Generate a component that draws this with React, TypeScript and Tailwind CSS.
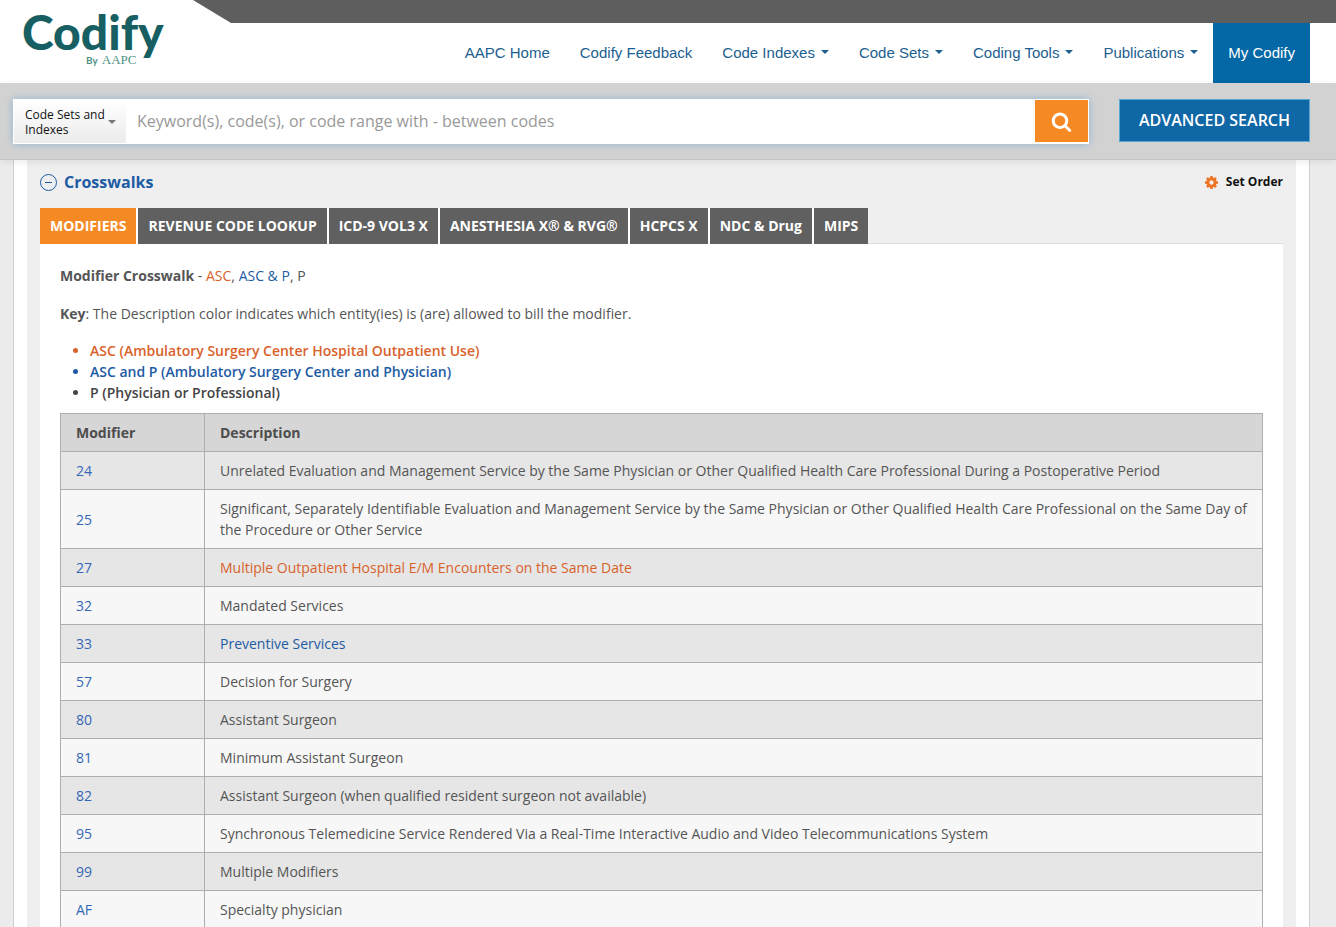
const navItems = [
  { label: 'AAPC Home', menu: false },
  { label: 'Codify Feedback', menu: false },
  { label: 'Code Indexes', menu: true },
  { label: 'Code Sets', menu: true },
  { label: 'Coding Tools', menu: true },
  { label: 'Publications', menu: true },
];

const tabs = [
  'MODIFIERS',
  'REVENUE CODE LOOKUP',
  'ICD-9 VOL3 X',
  'ANESTHESIA X® & RVG®',
  'HCPCS X',
  'NDC & Drug',
  'MIPS',
];

const modifiers = [
  { code: '24', text: 'Unrelated Evaluation and Management Service by the Same Physician or Other Qualified Health Care Professional During a Postoperative Period', color: '' },
  { code: '25', text: 'Significant, Separately Identifiable Evaluation and Management Service by the Same Physician or Other Qualified Health Care Professional on the Same Day of the Procedure or Other Service', color: '' },
  { code: '27', text: 'Multiple Outpatient Hospital E/M Encounters on the Same Date', color: 'text-[#d9622b]' },
  { code: '32', text: 'Mandated Services', color: '' },
  { code: '33', text: 'Preventive Services', color: 'text-[#1d5ba4]' },
  { code: '57', text: 'Decision for Surgery', color: '' },
  { code: '80', text: 'Assistant Surgeon', color: '' },
  { code: '81', text: 'Minimum Assistant Surgeon', color: '' },
  { code: '82', text: 'Assistant Surgeon (when qualified resident surgeon not available)', color: '' },
  { code: '95', text: 'Synchronous Telemedicine Service Rendered Via a Real-Time Interactive Audio and Video Telecommunications System', color: '' },
  { code: '99', text: 'Multiple Modifiers', color: '' },
  { code: 'AF', text: 'Specialty physician', color: '' },
];

const Caret = () => (
  <svg viewBox="0 0 8 4" className="w-2 h-1 shrink-0" aria-hidden="true">
    <path d="M0 0h8L4 4z" fill="currentColor" />
  </svg>
);

const SearchIcon = () => (
  <svg viewBox="0 0 1792 1792" className="size-[21px]" fill="currentColor" aria-hidden="true">
    <path d="M1216 832q0-185-131.5-316.5T768 384 451.5 515.5 320 832t131.5 316.5T768 1280t316.5-131.5T1216 832zm512 832q0 52-38 90t-90 38q-54 0-90-38l-343-342q-179 124-399 124-143 0-273.5-55.5t-225-150-150-225T64 832t55.5-273.5 150-225 225-150T768 128t273.5 55.5 225 150 150 225T1472 832q0 220-124 399l343 343q37 37 37 90z" />
  </svg>
);

const CogIcon = () => (
  <svg viewBox="128 128 1536 1536" className="size-[13px] text-[#ec7424]" fill="currentColor" aria-hidden="true">
    <path d="M1152 896q0-106-75-181t-181-75-181 75-75 181 75 181 181 75 181-75 75-181zm512-109v222q0 12-8 23t-20 13l-185 28q-19 54-39 91 35 50 107 138 10 12 10 25t-9 23q-27 37-99 108t-94 71q-12 0-26-9l-138-108q-44 23-91 38-16 136-29 186-7 28-36 28H785q-14 0-24.5-8.5T749 1634l-28-184q-49-16-90-37l-141 107q-10 9-25 9-14 0-25-11-126-114-165-159-7-10-7-23 0-12 8-23 15-21 51-66.5t54-70.5q-27-50-41-99l-183-27q-13-2-21-12.5t-8-23.5V783q0-12 8-23t19-13l186-28q14-46 39-92-40-57-107-138-10-12-10-24 0-10 9-23 26-36 98.5-107.5T465 263q13 0 26 10l138 107q44-23 91-38 16-136 29-186 7-28 36-28h222q14 0 24.5 8.5T1043 158l28 184q49 16 90 37l142-107q9-9 24-9 13 0 25 10 129 119 165 170 7 8 7 22 0 12-8 23-15 21-51 66.5t-54 70.5q26 50 41 98l183 28q13 2 21 12.5t8 23.5z" />
  </svg>
);

const Header = () => (
  <header className="relative h-[83px] shrink-0 bg-white">
    {/* grey strip with the slanted left end */}
    <div className="absolute top-0 right-0 left-[193px] h-[23px] bg-[#5e5e5e] [clip-path:polygon(0_0,100%_0,100%_100%,38px_100%)]" />
    <div className="flex h-full justify-between pl-[22px] pr-[26px]">
      <a href="#" className="flex flex-col pt-2 text-[#175f63] font-['Lato',sans-serif]">
        <span className="text-[48px] leading-[48px] font-black">Codify</span>
        <span className="-mt-1 pl-16 flex items-baseline gap-1 leading-4 text-[#4f9484]">
          <span className="text-[10px] font-bold">By</span>
          <span className="text-[13px] font-['Liberation_Serif',serif]">AAPC</span>
        </span>
      </a>
      <nav className="flex h-[60px] mt-[23px] text-[15px] text-[#1c608f] font-['Liberation_Sans',sans-serif]">
        {navItems.map((item) => (
          <a key={item.label} href="#" className="flex items-center gap-[6px] px-[15px] pb-[2px]">
            {item.label}
            {item.menu && <Caret />}
          </a>
        ))}
        <a href="#" className="flex items-center px-[15px] pb-[2px] bg-[#0368a5] text-white">My Codify</a>
      </nav>
    </div>
  </header>
);

const SearchBar = () => (
  <form className="relative z-10 flex shrink-0 items-start gap-[30px] h-[77px] pt-4 pl-[13px] pr-[26px] bg-[#d2d2d2] border-b border-[#c4c4c4] shadow-[0_2px_8px_#00000014]">
    <div className="flex flex-1 h-[45px] p-px bg-white shadow-[0_0_8px_#8fb4d4]">
      <button type="button" aria-haspopup="menu" className="flex items-center w-28 pl-[11px] text-left text-xs leading-[15px] text-[#111] bg-linear-to-b from-white to-[#ebebeb]">
        <span className="w-[83px] shrink-0">Code Sets and Indexes</span>
        <span className="text-[#777]"><Caret /></span>
      </button>
      <input
        type="text"
        aria-label="Search codes"
        placeholder="Keyword(s), code(s), or code range with - between codes"
        className="flex-1 min-w-0 px-[11px] pb-[2px] text-base placeholder:text-[#999] outline-none"
      />
      <button type="submit" aria-label="Search" className="flex items-center justify-center w-[53px] h-[42px] bg-[#f58a25] text-white">
        <SearchIcon />
      </button>
    </div>
    <button type="button" className="w-[191px] h-[43px] pb-[2px] border border-[#57a9d3] bg-[#1067a6] text-white text-base font-semibold">
      ADVANCED SEARCH
    </button>
  </form>
);

const ModifierTable = () => (
  <table className="w-full mt-[10px] border-collapse border border-[#aeaeae] text-left">
    <thead>
      <tr className="bg-[#d6d6d6] text-[#4d4d4d]">
        <th className="w-36 px-[15px] py-2 border border-[#aeaeae]">Modifier</th>
        <th className="pl-[15px] pr-3 py-2 border border-[#aeaeae]">Description</th>
      </tr>
    </thead>
    <tbody>
      {modifiers.map((row) => (
        <tr key={row.code} className="odd:bg-[#e6e6e6] even:bg-[#f7f7f7]">
          <td className="px-[15px] py-2 border border-[#aeaeae]">
            <a href="#" className="text-[#3467b5]">{row.code}</a>
          </td>
          <td className="pl-[15px] pr-3 py-2 border border-[#aeaeae]">
            <span className={row.color}>{row.text}</span>
          </td>
        </tr>
      ))}
    </tbody>
  </table>
);

const Crosswalks = () => (
  <section className="bg-[#efefef] px-[13px] pt-3">
    <div className="flex items-center justify-between h-5">
      <h2 className="flex items-center gap-[7px] text-base font-bold text-[#1d5ba4]">
        <svg viewBox="0 0 17 17" className="size-[17px]" fill="none" stroke="currentColor" aria-hidden="true">
          <circle cx="8.5" cy="8.5" r="8" />
          <path d="M5 8.5h7" />
        </svg>
        Crosswalks
      </h2>
      <button type="button" className="flex items-center gap-2 text-xs font-bold text-[#111]">
        <CogIcon />
        Set Order
      </button>
    </div>
    <div role="tablist" className="flex gap-[2px] mt-4 border-b border-[#dcdcdc]">
      {tabs.map((tab, i) => (
        <button
          key={tab}
          type="button"
          role="tab"
          aria-selected={i === 0}
          className="h-9 px-[10px] -mb-px text-sm font-bold text-white whitespace-nowrap bg-[#606060] not-last:shadow-[2px_0_0_#fff] aria-selected:bg-[#f58a25]"
        >
          {tab}
        </button>
      ))}
    </div>
    <div className="bg-white px-5 pt-[21px] pb-5">
      <p>
        <b>Modifier Crosswalk</b> - <span className="text-[#d9622b]">ASC</span>, <span className="text-[#1d5ba4]">ASC &amp; P</span>, P
      </p>
      <p className="mt-[17px]">
        <b>Key</b>: The Description color indicates which entity(ies) is (are) allowed to bill the modifier.
      </p>
      <ul className="mt-4 pl-[30px] list-disc font-semibold">
        <li className="text-[#d9622b]">ASC (Ambulatory Surgery Center Hospital Outpatient Use)</li>
        <li className="text-[#1d5ba4]">ASC and P (Ambulatory Surgery Center and Physician)</li>
        <li className="text-[#444]">P (Physician or Professional)</li>
      </ul>
      <ModifierTable />
    </div>
  </section>
);

export default function App() {
  return (
    <div className="flex flex-col h-screen bg-[#ececec] text-sm leading-[21px] text-[#555] font-['Open_Sans',sans-serif]">
      <Header />
      <SearchBar />
      {/* the page body scrolls under the fixed header */}
      <main className="flex-1 min-h-0 overflow-y-auto [scrollbar-width:none] pl-[13px] pr-[26px]">
        <div className="bg-white border-x border-[#cfcfd3] px-[13px]">
          <Crosswalks />
        </div>
      </main>
    </div>
  );
}
